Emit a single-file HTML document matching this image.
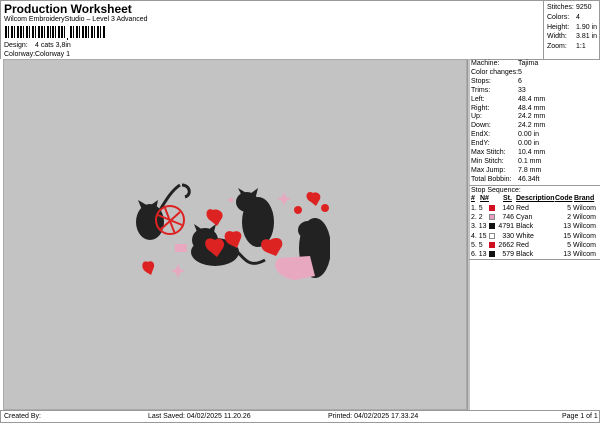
<!DOCTYPE html><html><head><style>
*{margin:0;padding:0;box-sizing:border-box}
body{width:600px;height:424px;background:#fff;position:relative;overflow:hidden;font-family:"Liberation Sans",Arial,sans-serif;font-size:7px;color:#000}
.a{position:absolute;white-space:nowrap}
.gray{position:absolute;left:3px;top:59px;width:464px;height:351px;background:#c3c3c3;border:1px solid #aaa}
.sw{display:inline-block;width:6px;height:6px;vertical-align:-1px}
</style></head><body>
<div class="a" style="left:0;top:0;width:600px;height:59px;border:1px solid #999;border-bottom:none"></div>
<div class="a" style="left:4px;top:2px;font-size:12px;font-weight:bold">Production Worksheet</div>
<div class="a" style="left:4px;top:16px">Wilcom EmbroideryStudio – Level 3 Advanced</div>
<svg class="a" style="left:5px;top:26px" width="100" height="14"><g fill="#000">
<rect x="0" y="0" width="2" height="12"/><rect x="3" y="0" width="1" height="12"/><rect x="6" y="0" width="2" height="12"/><rect x="9" y="0" width="1" height="12"/><rect x="12" y="0" width="2" height="12"/><rect x="15" y="0" width="2" height="12"/><rect x="18" y="0" width="1" height="12"/><rect x="21" y="0" width="2" height="12"/><rect x="24" y="0" width="1" height="12"/><rect x="27" y="0" width="2" height="12"/><rect x="30" y="0" width="1" height="12"/><rect x="33" y="0" width="2" height="12"/><rect x="36" y="0" width="2" height="12"/><rect x="39" y="0" width="1" height="12"/><rect x="42" y="0" width="2" height="12"/><rect x="45" y="0" width="1" height="12"/><rect x="47" y="0" width="2" height="12"/><rect x="50" y="0" width="1" height="12"/><rect x="53" y="0" width="2" height="12"/><rect x="56" y="0" width="2" height="12"/><rect x="59" y="0" width="1" height="12"/><rect x="62" y="12" width="1" height="2"/><rect x="65" y="0" width="2" height="12"/><rect x="68" y="0" width="1" height="12"/><rect x="71" y="0" width="2" height="12"/><rect x="74" y="0" width="1" height="12"/><rect x="77" y="0" width="2" height="12"/><rect x="80" y="0" width="2" height="12"/><rect x="83" y="0" width="1" height="12"/><rect x="86" y="0" width="2" height="12"/><rect x="89" y="0" width="1" height="12"/><rect x="92" y="0" width="2" height="12"/><rect x="95" y="0" width="1" height="12"/><rect x="98" y="0" width="2" height="12"/></g></svg>
<div class="a" style="left:4px;top:42px">Design:</div><div class="a" style="left:35px;top:42px">4 cats 3,8in</div>
<div class="a" style="left:4px;top:51px">Colorway:</div><div class="a" style="left:35px;top:51px">Colorway 1</div>
<div class="a" style="left:543px;top:0;width:1px;height:59px;background:#999"></div>
<div class="a" style="left:547px;top:3px;line-height:9.8px">Stitches:<br>Colors:<br>Height:<br>Width:<br>Zoom:</div>
<div class="a" style="left:576px;top:3px;line-height:9.8px">9250<br>4<br>1.90 in<br>3.81 in<br>1:1</div>
<div class="gray"></div>
<svg class="a" style="left:130px;top:180px" width="200" height="110" viewBox="0 0 200 110">
<g fill="#222"><ellipse cx="20" cy="42" rx="14" ry="18"/><path d="M8 20l4 10 8-3z M28 20l-2 10-8-3z"/><ellipse cx="85" cy="72" rx="24" ry="14"/><ellipse cx="75" cy="60" rx="13" ry="12"/><path d="M64 44l3 8 6-2z M86 44l-2 8-6-2z"/><ellipse cx="128" cy="42" rx="16" ry="25"/><path d="M108 8l4 8 6-2z M128 8l-2 8-6-2z"/><ellipse cx="117" cy="22" rx="11" ry="10"/><ellipse cx="185" cy="68" rx="16" ry="30"/><ellipse cx="178" cy="50" rx="10" ry="9"/></g>
<g fill="none" stroke="#222" stroke-width="3"><path d="M30 30c6-10 12-20 20-25M52 5c8 0 10 10 3 12"/><path d="M105 70c8 5 12 20 30 10"/></g>
<g fill="none" stroke="#d22" stroke-width="2"><circle cx="40" cy="40" r="14"/><path d="M28 35l24 10M30 50l20-18M35 28l10 26"/></g>
<g fill="#d22"><path d="M83 30c-6-4-10 6-2 11l6 5 5-8c3-6-5-10-9-8z"/><path d="M85 60c-10-6-14 6-4 12l6 5 6-9c4-7-4-12-8-8z"/><path d="M103 52c-8-4-12 6-4 12l8 4 4-10c2-6-4-8-8-6z"/><path d="M140 60c-10-4-12 8-4 12l10 4 6-10c2-8-6-10-12-6z"/><path d="M183 13c-6-4-10 5-2 9l5 4 4-7c2-5-4-8-7-6z"/><path d="M18 82c-6-3-8 6-2 10l5 3 3-8c1-5-3-7-6-5z"/><circle cx="168" cy="30" r="4"/><circle cx="195" cy="28" r="4"/></g>
<path d="M150 78c-10 4-4 20 15 22l20-4-5-20z" fill="#e8a8c0"/>
<path d="M45 64h12v8h-12z" fill="#e8a8c0"/>
<g fill="#e8a8c0"><path d="M154 12l2 5 5 2-5 2-2 5-2-5-5-2 5-2z"/><path d="M48 84l2 5 5 2-5 2-2 5-2-5-5-2 5-2z"/><rect x="99" y="18" width="4" height="4"/></g>
</svg>
<div class="a" style="left:467px;top:59px;width:1px;height:351px;background:#999"></div>
<div class="a" style="left:468px;top:59px;width:132px;height:1px;background:#999"></div>
<div class="a" style="left:468px;top:59px;width:132px;height:351px;border-left:2px solid #c3c3c3"></div>
<div class="a" style="left:471px;top:60px;line-height:8.9px">Machine:<br>Color changes:<br>Stops:<br>Trims:<br>Left:<br>Right:<br>Up:<br>Down:<br>EndX:<br>EndY:<br>Max Stitch:<br>Min Stitch:<br>Max Jump:<br>Total Bobbin:</div>
<div class="a" style="left:518px;top:60px;line-height:8.9px">Tajima<br>5<br>6<br>33<br>48.4 mm<br>48.4 mm<br>24.2 mm<br>24.2 mm<br>0.00 in<br>0.00 in<br>10.4 mm<br>0.1 mm<br>7.8 mm<br>46.34ft</div>
<div class="a" style="left:469px;top:185px;width:131px;height:1px;background:#999"></div>
<div class="a" style="left:471px;top:187px">Stop Sequence:</div>
<div class="a" style="left:471px;top:195px;font-weight:bold;text-decoration:underline">#</div>
<div class="a" style="left:480px;top:195px;font-weight:bold;text-decoration:underline">N#</div>
<div class="a" style="left:503px;top:195px;font-weight:bold;text-decoration:underline">St.</div>
<div class="a" style="left:516px;top:195px;font-weight:bold;text-decoration:underline">Description</div>
<div class="a" style="left:555px;top:195px;font-weight:bold;text-decoration:underline">Code</div>
<div class="a" style="left:574px;top:195px;font-weight:bold;text-decoration:underline">Brand</div>
<div class="a" style="left:471px;top:204px;line-height:9.2px">1. 5<br>2. 2<br>3. 13<br>4. 15<br>5. 5<br>6. 13</div>
<div class="a" style="left:489px;top:204px;line-height:9.2px"><span class="sw" style="background:#d01020"></span><br><span class="sw" style="background:#e8a0c0;border:1px solid #888"></span><br><span class="sw" style="background:#111"></span><br><span class="sw" style="background:#fff;border:1px solid #888"></span><br><span class="sw" style="background:#d01020"></span><br><span class="sw" style="background:#111"></span></div>
<div class="a" style="left:496px;top:204px;width:18px;text-align:right;line-height:9.2px">140<br>746<br>4791<br>330<br>2662<br>579</div>
<div class="a" style="left:516px;top:204px;line-height:9.2px">Red<br>Cyan<br>Black<br>White<br>Red<br>Black</div>
<div class="a" style="left:555px;top:204px;width:16px;text-align:right;line-height:9.2px">5<br>2<br>13<br>15<br>5<br>13</div>
<div class="a" style="left:573px;top:204px;line-height:9.2px">Wilcom<br>Wilcom<br>Wilcom<br>Wilcom<br>Wilcom<br>Wilcom</div>
<div class="a" style="left:469px;top:259px;width:131px;height:1px;background:#999"></div>
<div class="a" style="left:0;top:410px;width:600px;height:13px;border:1px solid #999"></div>
<div class="a" style="left:4px;top:413px">Created By:</div>
<div class="a" style="left:148px;top:413px">Last Saved: 04/02/2025 11.20.26</div>
<div class="a" style="left:328px;top:413px">Printed: 04/02/2025 17.33.24</div>
<div class="a" style="left:562px;top:413px">Page 1 of 1</div>
</body></html>
